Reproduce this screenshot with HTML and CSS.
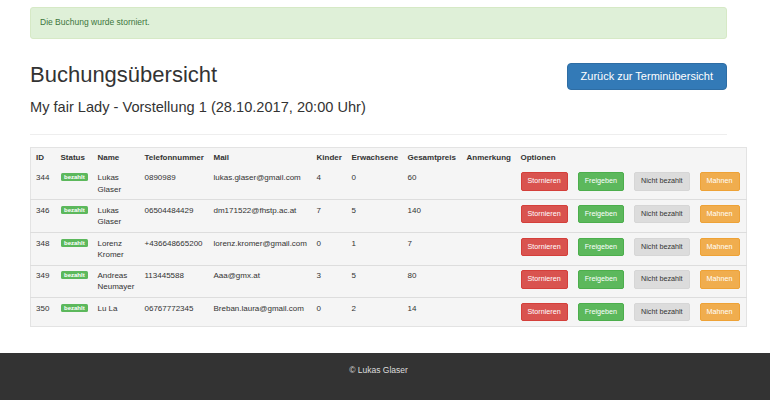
FILE: index.html
```
<!DOCTYPE html>
<html lang="de">
<head>
<meta charset="utf-8">
<title>Buchungsübersicht</title>
<link rel="stylesheet" href="styles.css">
</head>
<body>

<div class="container">
	<div class="alert">Die Buchung wurde storniert.</div>

	<div class="pagehead">
		<div>
			<h1>Buchungsübersicht</h1>
			<h3>My fair Lady - Vorstellung 1 (28.10.2017, 20:00 Uhr)</h3>
		</div>
		<a class="btn btn-lg btn-primary" href="#">Zurück zur Terminübersicht</a>
	</div>

	<hr>

	<table class="buchungen">
		<colgroup>
			<col class="c-id"><col class="c-status"><col class="c-name"><col class="c-tel"><col class="c-mail">
			<col class="c-kinder"><col class="c-erw"><col class="c-preis"><col class="c-anm"><col class="c-opt">
		</colgroup>
		<tr class="head">
			<th>ID</th><th>Status</th><th>Name</th><th>Telefonnummer</th><th>Mail</th>
			<th>Kinder</th><th>Erwachsene</th><th>Gesamtpreis</th><th>Anmerkung</th><th>Optionen</th>
		</tr>
		<tr>
			<td>344</td><td><span class="label">bezahlt</span></td><td>Lukas Glaser</td><td>0890989</td>
			<td>lukas.glaser@gmail.com</td><td>4</td><td>0</td><td>60</td><td></td>
			<td><div class="opts"><a class="btn btn-sm btn-danger" href="#">Stornieren</a><a class="btn btn-sm btn-success" href="#">Freigeben</a><a class="btn btn-sm btn-gray" href="#">Nicht bezahlt</a><a class="btn btn-sm btn-warning" href="#">Mahnen</a></div></td>
		</tr>
		<tr>
			<td>346</td><td><span class="label">bezahlt</span></td><td>Lukas Glaser</td><td>06504484429</td>
			<td>dm171522@fhstp.ac.at</td><td>7</td><td>5</td><td>140</td><td></td>
			<td><div class="opts"><a class="btn btn-sm btn-danger" href="#">Stornieren</a><a class="btn btn-sm btn-success" href="#">Freigeben</a><a class="btn btn-sm btn-gray" href="#">Nicht bezahlt</a><a class="btn btn-sm btn-warning" href="#">Mahnen</a></div></td>
		</tr>
		<tr>
			<td>348</td><td><span class="label">bezahlt</span></td><td>Lorenz Kromer</td><td>+436648665200</td>
			<td>lorenz.kromer@gmail.com</td><td>0</td><td>1</td><td>7</td><td></td>
			<td><div class="opts"><a class="btn btn-sm btn-danger" href="#">Stornieren</a><a class="btn btn-sm btn-success" href="#">Freigeben</a><a class="btn btn-sm btn-gray" href="#">Nicht bezahlt</a><a class="btn btn-sm btn-warning" href="#">Mahnen</a></div></td>
		</tr>
		<tr>
			<td>349</td><td><span class="label">bezahlt</span></td><td>Andreas Neumayer</td><td>113445588</td>
			<td>Aaa@gmx.at</td><td>3</td><td>5</td><td>80</td><td></td>
			<td><div class="opts"><a class="btn btn-sm btn-danger" href="#">Stornieren</a><a class="btn btn-sm btn-success" href="#">Freigeben</a><a class="btn btn-sm btn-gray" href="#">Nicht bezahlt</a><a class="btn btn-sm btn-warning" href="#">Mahnen</a></div></td>
		</tr>
		<tr>
			<td>350</td><td><span class="label">bezahlt</span></td><td>Lu La</td><td>06767772345</td>
			<td>Breban.laura@gmail.com</td><td>0</td><td>2</td><td>14</td><td></td>
			<td><div class="opts"><a class="btn btn-sm btn-danger" href="#">Stornieren</a><a class="btn btn-sm btn-success" href="#">Freigeben</a><a class="btn btn-sm btn-gray" href="#">Nicht bezahlt</a><a class="btn btn-sm btn-warning" href="#">Mahnen</a></div></td>
		</tr>
	</table>
</div>

<footer class="footer">
	<div class="container">© Lukas Glaser</div>
</footer>

</body>
</html>
```

FILE: styles.css
```
body {
	margin: 0;
	font-family: "Liberation Sans", Arial, sans-serif;
	font-size: 8.5px;
	line-height: 11.5px;
	color: #333;
	background: #fff;
}
.container {
	width: 697px;
	margin-left: 30px;
}
.alert {
	margin-top: 7px;
	padding: 9px;
	background-color: #dff0d8;
	border: 1px solid #d6e9c6;
	border-radius: 3px;
	color: #3c763d;
}
.pagehead {
	display: flex;
	justify-content: space-between;
	align-items: flex-start;
	margin-top: 24px;
}
h1 {
	margin: 0;
	font-size: 22px;
	line-height: 24px;
	font-weight: normal;
}
h3 {
	margin: 12px 0 0 0;
	font-size: 14.6px;
	line-height: 16px;
	font-weight: normal;
}
hr {
	margin: 19px 0 0 0;
	border: 0;
	border-top: 1px solid #eee;
}
.btn {
	display: inline-block;
	text-decoration: none;
	color: #fff;
	border: 1px solid transparent;
	white-space: nowrap;
}
.btn-lg {
	font-size: 11px;
	line-height: 13px;
	padding: 6px 13px;
	border-radius: 4px;
}
.btn-sm {
	font-size: 7.2px;
	line-height: 10.3px;
	padding: 3px 6px;
	border-radius: 2px;
}
.btn-primary {
	background-color: #337ab7;
	border-color: #2e6da4;
}
.btn-danger {
	background-color: #d9534f;
	border-color: #d43f3a;
}
.btn-success {
	background-color: #5cb85c;
	border-color: #4cae4c;
}
.btn-warning {
	background-color: #f0ad4e;
	border-color: #eea236;
}
.btn-gray {
	background-color: #dcdcdc;
	border-color: #d6d6d6;
	color: #333;
}

.buchungen {
	margin-top: 12px;
	width: 716px;
	table-layout: fixed;
	border-collapse: collapse;
	background-color: #f5f5f5;
	border: 1px solid #e3e3e3;
	font-size: 8px;
	line-height: 11.2px;
}
.buchungen th, .buchungen td {
	padding: 4.6px 5px;
	text-align: left;
	vertical-align: top;
}
.buchungen td {
	border-top: 1px solid #ddd;
}
.buchungen tr:nth-child(2) td {
	border-top: 0;
}
.c-id { width: 25px; }
.c-status { width: 37px; }
.c-name { width: 47px; }
.c-tel { width: 69px; }
.c-mail { width: 103px; }
.c-kinder { width: 35px; }
.c-erw { width: 56px; }
.c-preis { width: 59px; }
.c-anm { width: 54px; }
.c-opt { width: 231px; }

.label {
	display: inline-block;
	padding: 1px 3.5px;
	font-size: 6px;
	line-height: 6px;
	font-weight: bold;
	color: #fff;
	background-color: #5cb85c;
	border-radius: 1.5px;
	vertical-align: 1px;
}
.opts {
	display: flex;
	gap: 10px;
}

.footer {
	margin-top: 26px;
	padding: 12px 0 30px 0;
	background-color: #333;
	color: #ddd;
}
.footer .container {
	text-align: center;
}
```
